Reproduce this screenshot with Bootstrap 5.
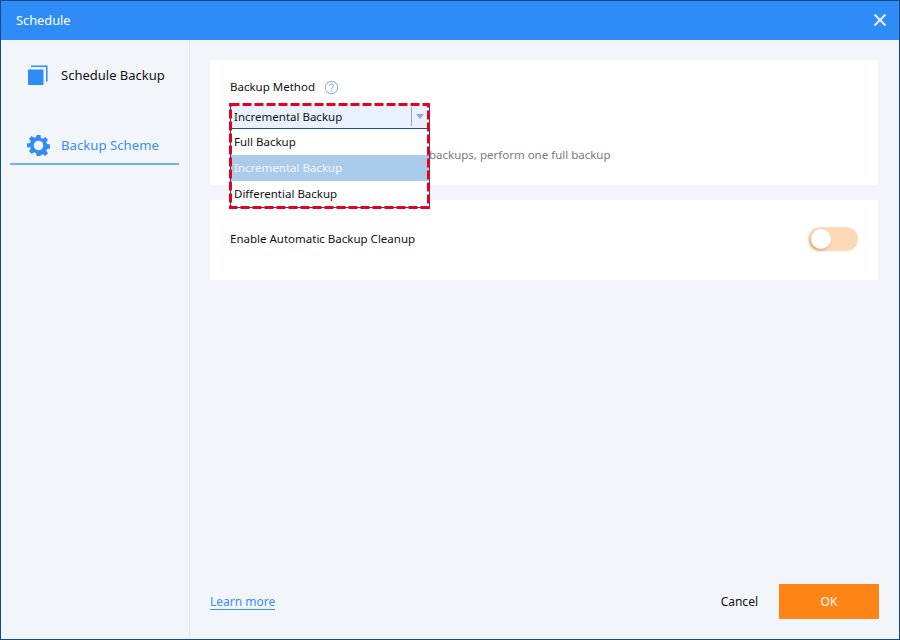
<!DOCTYPE html>
<html lang="en">
<head>
<meta charset="utf-8">
<title>Schedule</title>
<link href="https://cdn.jsdelivr.net/npm/bootstrap@5.3.0/dist/css/bootstrap.min.css" rel="stylesheet">
<style>
html,body{margin:0;height:100%;background:#f1f5fb}
body{font-family:"Noto Sans","Liberation Sans",sans-serif;font-size:11.5px;line-height:16px;color:#111}
.dlg{width:900px;height:640px;border:1px solid #0f4a8a;background:#f2f6fb}
.ttl{height:39px;background:#2f8cf6;color:#fff;padding:0 12px 2px 15px;font-size:12.8px}
.side{width:189px;border-right:1px solid #dfe3e8;flex:none}
.stab{margin:0 10px 0 9px;font-size:13px;color:#111}
.stab.first{margin-top:13px;height:44px;padding-left:18px;gap:13px}
.stab.on{margin-top:23px;color:#3c8ef5;border-bottom:2px solid #74b0f8;height:45px;padding-left:17px;padding-top:7px;gap:11px;font-size:13.2px}
.mainp{padding:20px 21px 0 20px}
.pnl{background:#fff;padding:0 20px}
.p1{height:125px;margin-bottom:15px;padding-top:19px;position:relative}
.p2{height:80px}
.lbl2{margin-bottom:2px}
.qm{width:15px;height:15px;margin-left:9px}
.hint{margin-top:52px;padding-left:199px;color:#7a7a7a}
.drop{position:absolute;left:20px;top:46px;width:200px;background:#fff;border:1px solid #1f4f86;border-top:0}
.dhead{height:23px;background:#e8f1fd;border-bottom:1px solid #1f4f86;padding:0 0 1px 3px}
.dsep{width:1px;height:19px;background:#8fa7c4;margin-left:auto}
.dcar{width:0;height:0;border-left:4px solid transparent;border-right:4px solid transparent;border-top:5px solid #8fa9d2;margin:0 5px 0 4px}
.dit{height:26px;padding:0 0 0 3px}
.dit.sel{background:#abcbeb;color:#f3f7fc}
.redbox{position:absolute;left:19px;top:43px;width:201px;height:106px;pointer-events:none}
.sw{width:50px;height:24px;border-radius:12px;background:#fdd9b8;position:relative;margin-bottom:2px}
.kn{position:absolute;left:3px;top:2px;width:20px;height:20px;border-radius:50%;background:#fff;box-shadow:-1px 2px 3px rgba(214,150,90,.7)}
.foot{padding:0 20px 20px 20px;font-size:12px}
.lm{color:#3c8ef5;text-decoration:none;border-bottom:1px solid #3c8ef5;line-height:14px;margin-top:2px}
.cancel{margin-right:21px;color:#111}
.okb{width:100px;height:35px;background:#fe8416;color:#fff;border:0;border-radius:0;font-size:12px;padding:0}
.okb:hover{background:#fe8416;color:#fff}
</style>
</head>
<body>
<div class="dlg d-flex flex-column">
  <div class="ttl d-flex align-items-center justify-content-between">
    <span>Schedule</span>
    <svg width="14" height="14" viewBox="0 0 14 14"><path d="M1.500 1.500l11 11M12.500 1.500l-11 11" stroke="#e3effd" stroke-width="2" fill="none"/></svg>
  </div>
  <div class="d-flex flex-grow-1">
    <div class="side">
      <div class="stab first d-flex align-items-center">
        <svg width="20" height="20" viewBox="0 0 20 20"><path d="M0 4.500h15.500v15.500H0z" fill="#2f8cf6"/><path d="M3 1.200h15.800v15.300" fill="none" stroke="#2f8cf6" stroke-width="1.500"/></svg>
        <span>Schedule Backup</span>
      </div>
      <div class="stab on d-flex align-items-center">
        <svg width="23" height="23" viewBox="0 0 24 24"><path fill="#2f8cf6" fill-rule="evenodd" d="M10 1h4l.6 3.100 1.900.8 2.600-1.800 2.800 2.800-1.800 2.600.8 1.900 3.100.6v4l-3.100.6-.8 1.900 1.800 2.600-2.800 2.800-2.600-1.800-1.900.8L14 23h-4l-.6-3.100-1.900-.8-2.600 1.800-2.800-2.800 1.800-2.600-.8-1.900L0 14v-4l3.100-.6.8-1.900L2.100 4.900l2.800-2.800 2.600 1.800 1.900-.8zM12 7a5 5 0 1 0 0 10 5 5 0 0 0 0-10z"/></svg>
        <span>Backup Scheme</span>
      </div>
    </div>
    <div class="flex-grow-1 d-flex flex-column">
      <div class="mainp flex-grow-1">
        <div class="pnl p1">
          <div class="d-flex align-items-center">
            <span>Backup Method</span>
            <svg class="qm" viewBox="0 0 14 14"><circle cx="7" cy="7" r="5.800" fill="none" stroke="#9db4cc"/><path d="M5.200 5.500a1.800 1.800 0 1 1 2.700 1.600c-.6.400-.9.700-.9 1.400" fill="none" stroke="#9db4cc"/><circle cx="7" cy="10.300" r=".7" fill="#9db4cc"/></svg>
          </div>
          <div class="hint">backups, perform one full backup</div>
          <div class="drop">
            <div class="dhead d-flex align-items-center"><span>Incremental Backup</span><span class="dsep"></span><span class="dcar"></span></div>
            <div class="dit d-flex align-items-center">Full Backup</div>
            <div class="dit sel d-flex align-items-center">Incremental Backup</div>
            <div class="dit d-flex align-items-center">Differential Backup</div>
          </div>
          <svg class="redbox" viewBox="0 0 201 106"><rect x="1.500" y="1.500" width="198" height="103" fill="none" stroke="#e8001c" stroke-width="3" stroke-dasharray="9 3"/></svg>
        </div>
        <div class="pnl p2 d-flex align-items-center justify-content-between">
          <span class="lbl2">Enable Automatic Backup Cleanup</span>
          <span class="sw"><span class="kn"></span></span>
        </div>
      </div>
      <div class="foot d-flex align-items-center justify-content-between">
        <a class="lm" href="#">Learn more</a>
        <div class="d-flex align-items-center">
          <span class="cancel">Cancel</span>
          <button class="btn okb" type="button">OK</button>
        </div>
      </div>
    </div>
  </div>
</div>
</body>
</html>
